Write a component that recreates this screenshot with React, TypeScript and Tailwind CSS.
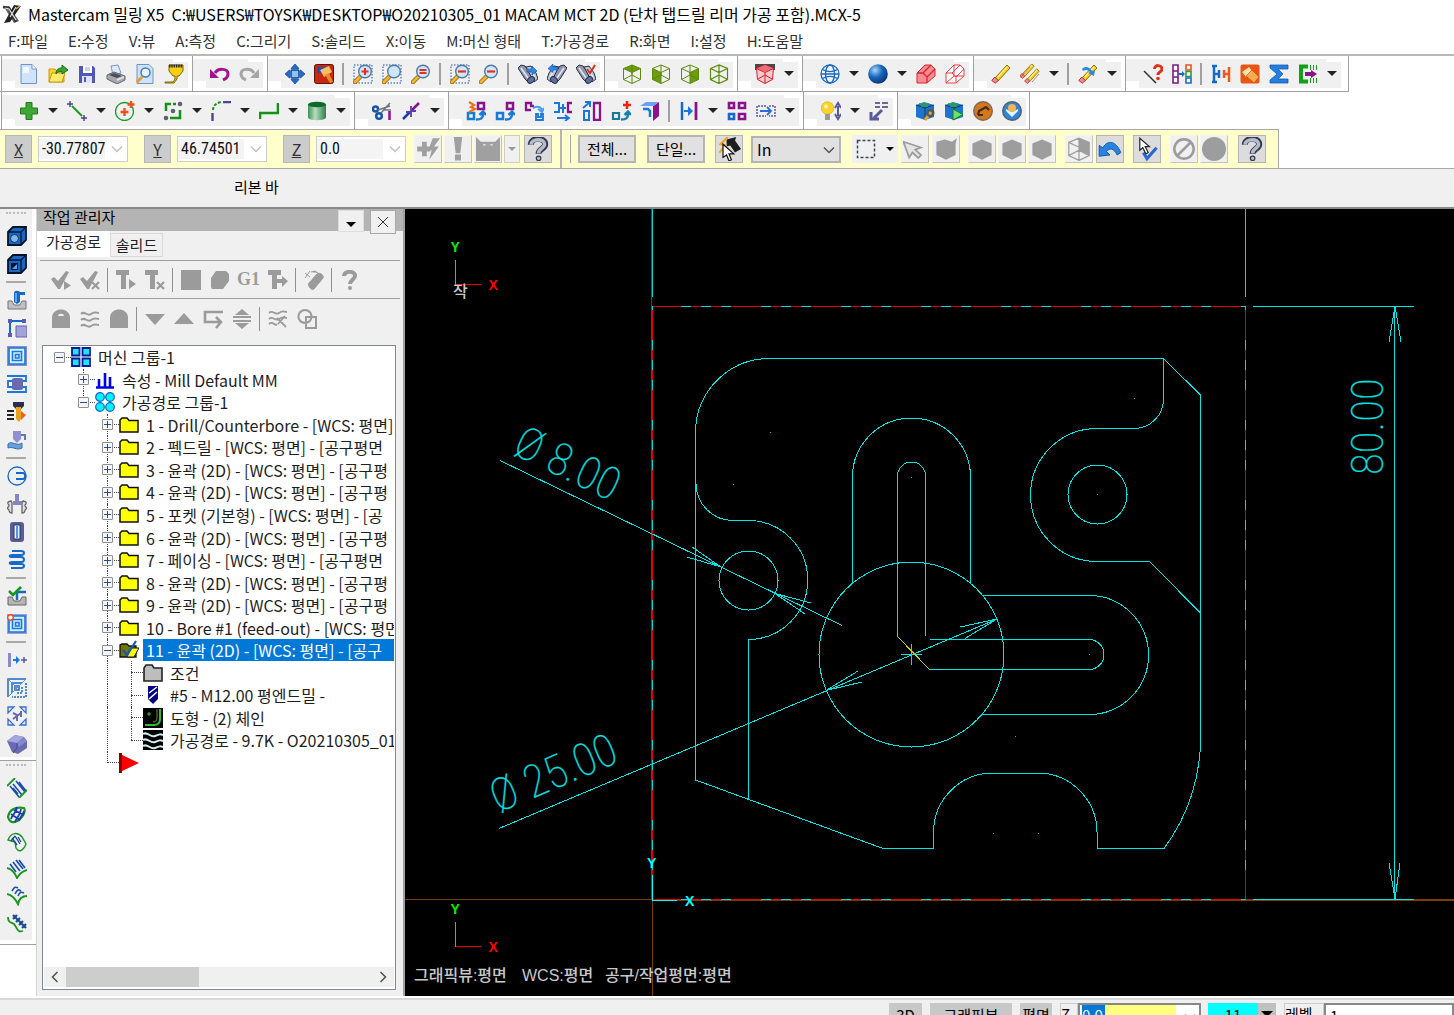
import type { ReactNode } from "react";

const cubeLines = "M1.500 4.500 10 1l8.500 3.500v11L10 19.500l-8.500-4zM1.500 4.500 10 8.500l8.500-4M10 8.500v11M1.500 15.500 10 11l8.500 4.500M10 1v10";

const magnifier = (sign: ReactNode, dotted = true) => (
  <>
    {dotted && <rect x="1" y="1" width="18" height="18" fill="none" stroke="#1b4fae" strokeDasharray="1.500 1.500" />}
    <path d="m2 18 5.500-5.500" stroke="#8a5a14" strokeWidth="4.500" strokeLinecap="round" />
    <path d="m2 18 5.500-5.500" stroke="#f4b52c" strokeWidth="3" strokeLinecap="round" />
    <circle cx="12" cy="7.500" r="6.300" fill="#cfe7fb" stroke="#4f78a8" strokeWidth="1.400" />
    {sign}
  </>
);

const binoculars = (extra: ReactNode, flip = false) => (
  <>
    <g transform={flip ? "translate(20 0) scale(-1 1)" : undefined} stroke="#2b3040" strokeWidth="1">
      <path d="M0 4 3 1l4 1 9 12-5 5-4-4z" fill="#8f97ae" />
      <path d="m8 3 5-1 5 7 2 6-4 3z" fill="#b9c0d4" />
      <path d="m3 4 7 10M11 4l6 9" stroke="#e4e8f4" strokeWidth="1.500" />
      <ellipse cx="13" cy="16" rx="3.800" ry="2.800" fill="#5c6fa0" transform="rotate(-40 13 16)" />
    </g>
    {extra}
  </>
);

const eraser = (
  <>
    <path d="m4 14 12-13 3 3L7 17z" fill="#f2cf1d" stroke="#8d6f0c" />
    <path d="m7 13 9-10" stroke="#fff08a" strokeWidth="1.300" />
    <path d="m.800 16.500 3-3.500 3.500 3.500-3 2.700z" fill="#f58a8a" stroke="#b23434" />
  </>
);

const cursorShape = "M3 1v14l4-3 3 6 3-1.500-3-6h5z";

const icons: Record<string, ReactNode> = {
  logo: (
    <>
      <path d="m2 3 5-1 10 15-5 2z" fill="#666" />
      <path d="m12 1 7 1L8 18l-6 1z" fill="#222" />
      <path d="m1 3 6 1 7 14" stroke="#333" strokeWidth="2.500" fill="none" />
      <path d="m3 4 4 1 7 11M14 3 8 13" stroke="#e4e4e4" strokeWidth="1.200" fill="none" />
      <path d="m14 5 4-3" stroke="#c9a15a" strokeWidth="1.500" />
    </>
  ),
  new: (
    <>
      <path d="M2 .500h11l4.500 4.500v14.500H2z" fill="#cfe3fa" stroke="#6f94c4" />
      <path d="M13 .500V5h4.500" fill="#fff" stroke="#6f94c4" />
      <path d="M4 3h6v6H4z" fill="#f1f8ff" />
    </>
  ),
  open: (
    <>
      <path d="M1 5h6l2 2h7v11H1z" fill="#f6d223" stroke="#c59c10" />
      <path d="m1 18 3-9h13l-3 9z" fill="#fdea6b" stroke="#c59c10" />
      <path d="M8 10c0-5 3-6 6-6V1l6 5-6 4V7.500c-3 0-4 0-6 2.500z" fill="#3aa534" stroke="#1d6e1b" />
    </>
  ),
  save: (
    <>
      <path d="M2 2h14l2 2v15H2z" fill="#5258b8" />
      <path d="M6 2h9v7H6z" fill="#fff" />
      <path d="M8 4h5M8 6h5" stroke="#9aa0c8" />
      <path d="M5 12h10v7H5z" fill="#dfe3ff" />
      <path d="M7 13h2v5H7z" fill="#5258b8" />
    </>
  ),
  print: (
    <>
      <path d="m5 2 7-1 3 8-8 2z" fill="#dcebfb" stroke="#7b96c0" />
      <path d="m1 11 7-3 11 4v4l-8 4-10-5z" fill="#a5a8ae" stroke="#62666e" />
      <path d="m3 11 5-2 8 3-5 2z" fill="#4a4d53" />
      <path d="m11 15 7-3v2l-7 3z" fill="#e2e4e8" />
    </>
  ),
  preview: (
    <>
      <path d="M2 .500h12l4 4v15H2z" fill="#cfe3fa" stroke="#6f94c4" />
      <circle cx="10.500" cy="8.500" r="4.500" fill="#eaf6ff" stroke="#3f7cb8" strokeWidth="1.500" />
      <path d="m2 18 5-5" stroke="#e69c25" strokeWidth="3" />
    </>
  ),
  funnel: (
    <>
      <path d="M5 1h14v6l-4 5h-2v3l-3 4H1v-1h8l2-3v-3H9L5 7z" fill="#f6cf13" stroke="#7c6409" />
      <path d="M5 2h14" stroke="#2b2b2b" strokeWidth="3" strokeDasharray="1.500 .8" />
    </>
  ),
  undo: (
    <>
      <path d="M5 9c3-5 13-5 13 1 0 4-3 5-5 6" fill="none" stroke="#a2128f" strokeWidth="3" />
      <path d="M0 5v9h9z" fill="#a2128f" />
    </>
  ),
  redo: (
    <>
      <path d="M15 9C12 4 2 4 2 10c0 4 3 5 5 6" fill="none" stroke="#a5a5a5" strokeWidth="3" />
      <path d="M20 5v9h-9z" fill="#a5a5a5" />
    </>
  ),
  fit: (
    <>
      <path d="m10 0 4 4.500H6zM10 20l-4-4.500h8zM0 10l4.500-4v8zM20 10l-4.500 4V6z" fill="#1c6fd8" stroke="#0b4494" strokeWidth=".7" />
      <rect x="6" y="6" width="8" height="8" rx="1" fill="#8cc3f7" stroke="#0b4494" strokeWidth="1.500" />
    </>
  ),
  repaint: (
    <>
      <rect x=".5" y=".5" width="19" height="19" rx="2" fill="#c7260f" stroke="#5c1608" />
      <path d="M3 3h9v6H3z" fill="#1d4fb5" />
      <path d="m6 6 9-4 3 6-8 5z" fill="#f7bd67" />
      <path d="m11 11 4-2 4 9-3 1z" fill="#e98b24" />
    </>
  ),
  zoomWindow: magnifier(<path d="M12 4v7M8.500 7.500h7" stroke="#e2311d" strokeWidth="2.200" />),
  zoomTarget: magnifier(null),
  zoomEqual: magnifier(<path d="M8.500 6h7M8.500 9h7" stroke="#e2311d" strokeWidth="1.800" />, false),
  unzoomWindow: magnifier(<path d="M8 7.500h8" stroke="#e2311d" strokeWidth="2.200" />),
  unzoom: magnifier(<path d="M8 7.500h8" stroke="#e2311d" strokeWidth="2.200" />, false),
  viewNext: binoculars(<path d="M9 5h5V2l5 5-5 4V8H9z" fill="#2f86e4" stroke="#134e98" strokeWidth=".6" />),
  viewPrev: binoculars(<path d="M11 3H6V0L1 4.500l5 4V6h5z" fill="#2f86e4" stroke="#134e98" strokeWidth=".6" />, true),
  viewSave: binoculars(<path d="m11 5 3 4 5-8" fill="none" stroke="#d9311a" strokeWidth="2" />),
  cubeTop: (
    <>
      <path d="M1.500 4.500 10 1l8.500 3.500L10 8.500z" fill="#6c9c10" />
      <path d={cubeLines} fill="none" stroke="#5d8a0b" />
    </>
  ),
  cubeFront: (
    <>
      <path d="m1.500 4.500 8.500 4v11l-8.500-4z" fill="#6c9c10" />
      <path d={cubeLines} fill="none" stroke="#5d8a0b" />
    </>
  ),
  cubeRight: (
    <>
      <path d="m18.500 4.500-8.500 4v11l8.500-4z" fill="#6c9c10" />
      <path d={cubeLines} fill="none" stroke="#5d8a0b" />
    </>
  ),
  cubeIso: <path d={cubeLines} fill="none" stroke="#5d8a0b" strokeWidth="1.200" />,
  cubePlane: (
    <>
      <path d="M0 0h20v6H0z" fill="#4a4546" />
      <path d="M1.500 4.500 10 1l8.500 3.500-1 11L10 19.500l-7.500-4z" fill="#f9c9cc" stroke="#d8202c" />
      <path d="M1.500 4.500 10 1l8.500 3.500L10 8z" fill="#ef6b74" />
      <path d="m1.500 4.500 8.500 4 8.500-4M10 8.500v11M3 15l7-4 7 4" fill="none" stroke="#d8202c" />
    </>
  ),
  wireSphere: (
    <g fill="none" stroke="#1769c9" strokeWidth="1.300">
      <circle cx="10" cy="10" r="9" />
      <ellipse cx="10" cy="10" rx="4.500" ry="9" />
      <path d="M1 10h18M2.500 5.500C7 8 13 8 17.500 5.500M2.500 14.500c4.500-2.500 10.500-2.500 15 0" />
    </g>
  ),
  sphere: (
    <>
      <radialGradient id="sphereFill" cx=".35" cy=".3" r=".75">
        <stop offset="0" stopColor="#a9d4fb" />
        <stop offset=".5" stopColor="#1766bd" />
        <stop offset="1" stopColor="#08356f" />
      </radialGradient>
      <circle cx="10" cy="10" r="9.800" fill="url(#sphereFill)" />
    </>
  ),
  solidRed: (
    <>
      <path d="m1 9 8-8h6l4 4v7l-8 7H1z" fill="#f58d93" stroke="#e0232d" />
      <path d="M1 9h6l4 4v6M7 9l8-8M11 13l8-8" fill="none" stroke="#e0232d" strokeWidth="1.300" />
    </>
  ),
  wireRed: (
    <>
      <path d="m1 9 8-8h6l4 4v7l-8 7H1z" fill="#fff" stroke="#ef3f49" />
      <path d="M1 9h6l4 4v6M7 9l8-8M11 13l8-8M1 19l8-7h10M9 12V1" fill="none" stroke="#ef3f49" />
    </>
  ),
  eraser,
  eraserMany: (
    <>
      <g transform="translate(-1 -1) scale(.8)">{eraser}</g>
      <g transform="translate(4 4) scale(.8)">{eraser}</g>
      <path d="m1 13 9-10M12 18l7-8" stroke="#b23434" strokeWidth=".6" />
    </>
  ),
  eraserUndo: (
    <>
      {eraser}
      <path d="M4 5c4-4 8-1 10 2l3-1-1 6-6-3 2-1c-2-2-4-3-7-1z" fill="#2f86e4" />
    </>
  ),
  helpEntity: (
    <>
      <path d="m1 7 12 12" stroke="#333" strokeWidth="1.500" />
      <path d="M11.500 5c0-5 7.500-4 7.500 0 0 3-4 2.500-4 6" fill="none" stroke="#e0311c" strokeWidth="3" />
      <circle cx="15" cy="14.500" r="1.800" fill="#e0311c" />
    </>
  ),
  film: (
    <>
      <path d="M1 1h5v18H1zM1 7h5M1 13h5" fill="#fff" stroke="#7c1a85" strokeWidth="1.600" />
      <path d="M14 1h5v5h-5z" fill="#fff" stroke="#e8531a" strokeWidth="1.600" />
      <path d="M14 7.500h5v5h-5z" fill="#fff" stroke="#2a9c36" strokeWidth="1.600" />
      <path d="M14 14h5v5h-5z" fill="#fff" stroke="#1769c9" strokeWidth="1.600" />
      <path d="M7 9h3V7l3 3-3 3v-2H7z" fill="#1769c9" />
    </>
  ),
  compare: (
    <>
      <path d="M3 1v18M1 2h5M1 18h5M3 10h6M8 6v8" stroke="#1769c9" strokeWidth="2.500" />
      <path d="M18 3v15M12 10h6M13 6v8" stroke="#ef5a1a" strokeWidth="2.500" />
    </>
  ),
  brush: (
    <>
      <rect x=".5" y=".5" width="19" height="19" rx="2" fill="#ea5414" />
      <path d="m2 8 7-5 3 4-6 6z" fill="#ffe0a8" />
      <path d="m6 12 6-6 7 7-5 6z" fill="#f5ac4e" stroke="#b24b0b" strokeWidth=".6" />
    </>
  ),
  sigma: <path d="M1 1h18v4H9l5 5-5 5h10v4H1v-3l7-6-7-6z" fill="#2380e2" stroke="#0e4f9e" strokeWidth=".7" />,
  stitch: (
    <>
      <path d="M10 2.500H3v15h7" fill="none" stroke="#12a01c" strokeWidth="4" />
      <path d="M12.500 1v18M15.500 1v18M18.500 1v18" stroke="#12a01c" strokeDasharray="5 8" />
      <path d="M7 8h6V6l6 4-6 4v-2H7z" fill="#8a128a" />
    </>
  ),

  plus: <path d="M7 1.500h6V7h5.500v6H13v5.500H7V13H1.500V7H7z" fill="#3fa535" stroke="#1e7e19" />,
  line: (
    <>
      <path d="m5 5 10 10" stroke="#169b1d" strokeWidth="2" />
      <path d="M3 0v6M0 3h6M17 14v6M14 17h6" stroke="#45408c" strokeWidth="1.400" />
    </>
  ),
  circle: (
    <>
      <circle cx="9.500" cy="10.500" r="9" fill="none" stroke="#169b1d" strokeWidth="1.300" />
      <path d="M9.500 7v8M5.500 11h8M16 0v7M12.500 3.500h7" stroke="#f04e1c" strokeWidth="2.400" />
    </>
  ),
  rect: (
    <>
      <path d="M8 3H3v7M7 17h10V9M10 3h3" fill="none" stroke="#159018" strokeWidth="2.500" />
      <circle cx="10" cy="10" r="2.300" fill="#5f6070" />
      <circle cx="17" cy="3" r="2.300" fill="#5f6070" />
      <circle cx="3" cy="17" r="2.300" fill="#5f6070" />
    </>
  ),
  fillet: (
    <>
      <path d="M1.500 12v8M12 1h8" stroke="#4b4791" strokeWidth="2.400" />
      <path d="M2 9c0-4 3-7 8-8" fill="none" stroke="#159018" strokeWidth="2" strokeDasharray="3 1.500" />
    </>
  ),
  spline: <path d="M1 18v-6h18V2" fill="none" stroke="#159018" strokeWidth="2.600" />,
  cylinder: (
    <>
      <linearGradient id="cylinderFill">
        <stop offset="0" stopColor="#3c9358" />
        <stop offset=".4" stopColor="#b8dcc2" />
        <stop offset="1" stopColor="#2a8247" />
      </linearGradient>
      <path d="M1 3h18v14c-3 3-15 3-18 0z" fill="url(#cylinderFill)" />
      <ellipse cx="10" cy="3.500" rx="9" ry="2.800" fill="#0c6b2a" />
    </>
  ),
  trim: (
    <>
      <circle cx="3.500" cy="8" r="2.500" fill="none" stroke="#1652a8" strokeWidth="2.500" />
      <circle cx="7" cy="15" r="2.800" fill="none" stroke="#1652a8" strokeWidth="2.500" />
      <path d="m6 9 12-4M9 12l9-10M12 9h7" stroke="#6e7585" strokeWidth="1.600" />
      <path d="M17.500 10v9" stroke="#8a128a" strokeWidth="2.500" />
    </>
  ),
  breakLine: (
    <>
      <path d="m2 18 7-7" stroke="#1a3f9e" strokeWidth="2.500" />
      <path d="m11 9 7-7" stroke="#8a128a" strokeWidth="2.500" />
      <path d="M5 11h5v5M10 5v5h5" fill="none" stroke="#5a3fae" strokeWidth="1.800" />
    </>
  ),
  xformDynamic: (
    <>
      <path d="M12 2h6v6h-6z" fill="none" stroke="#8a128a" strokeWidth="2.500" />
      <path d="M2 12h6v6H2z" fill="none" stroke="#1878dc" strokeWidth="2.500" />
      <path d="m3 1 5 3-3 2 4 2-6 3" fill="none" stroke="#f0701a" strokeWidth="2.200" />
      <path d="M10 18.500c5 0 7-1 7-6M13.500 14 17 10.500 20 14" fill="none" stroke="#1878dc" strokeWidth="2.500" />
    </>
  ),
  xformTranslate: (
    <>
      <path d="M12 2h6v6h-6z" fill="none" stroke="#8a128a" strokeWidth="2.500" />
      <path d="M2 12h6v6H2z" fill="none" stroke="#1878dc" strokeWidth="2.500" />
      <path d="M10 18.500c5 0 7-1 7-6M13.500 14 17 10.500 20 14" fill="none" stroke="#1878dc" strokeWidth="2.500" />
    </>
  ),
  xformRotate: (
    <>
      <path d="M7 9H2V2h5v3h3" fill="none" stroke="#8a128a" strokeWidth="2.300" />
      <path d="M12 13v6h7v-6h-2v3h-3v-3z" fill="#fff" stroke="#1878dc" strokeWidth="1.800" />
      <path d="M9 7c6-3 9 0 9 3M14 8l4 3 2-4" fill="none" stroke="#4aa0ee" strokeWidth="2" />
    </>
  ),
  xformMirror: (
    <>
      <path d="M1 2h5v9H1M10 3v9M7 7h6" fill="none" stroke="#1878dc" strokeWidth="2" />
      <path d="M19 2h-4v9h4" fill="none" stroke="#8a128a" strokeWidth="2.300" />
      <path d="M4 17h11M12 14l4 3-4 3" fill="none" stroke="#1878dc" strokeWidth="1.800" />
    </>
  ),
  xformScale: (
    <>
      <path d="M2 10h5v9H2z" fill="none" stroke="#1878dc" strokeWidth="2" />
      <path d="M12 2h6v17h-6z" fill="none" stroke="#8a128a" strokeWidth="2.300" />
      <path d="m1 7 7-6M3 1h5v5" fill="none" stroke="#1878dc" strokeWidth="2" />
    </>
  ),
  xformMove: (
    <>
      <path d="M2 12h6v6H2z" fill="none" stroke="#1878a0" strokeWidth="2.200" />
      <path d="M10 18.500c5 0 7-1 7-6M13.500 14 17 10.500 20 14" fill="none" stroke="#1880b0" strokeWidth="2.500" />
      <path d="M16 0v8M12 4h8" stroke="#ee2413" strokeWidth="2.500" />
    </>
  ),
  xformOffset: (
    <>
      <path d="M13 5 19 1v14l-6 5z" fill="#8a128a" />
      <path d="M0 5 6 1h12l-4 4z" fill="#6f9ff4" />
      <path d="M3 8h5l2 2v6" fill="none" stroke="#1878dc" strokeWidth="2.500" />
    </>
  ),
  offset: (
    <>
      <path d="M3 1v18" stroke="#1769c9" strokeWidth="2.500" />
      <path d="M17 1v18" stroke="#8a128a" strokeWidth="2.800" />
      <path d="M5 9h4V5l5 5-5 5v-4H5z" fill="#1878dc" />
    </>
  ),
  array: (
    <g fill="none" strokeWidth="2.600">
      <path d="M2 2h5v5H2zM12 2h6v5h-6zM12 13h6v5h-6z" stroke="#8a128a" />
      <path d="M2 13h5v5H2z" stroke="#1769c9" />
    </g>
  ),
  stretch: (
    <>
      <path d="M10 5H1v10h9M13 5h6v10h-6" fill="none" stroke="#5a5aa6" strokeWidth="1.500" strokeDasharray="2 1" />
      <path d="M4 10h10M11 6l4 4-4 4" fill="none" stroke="#2a70d4" strokeWidth="1.800" />
    </>
  ),
  bulb: (
    <>
      <circle cx="6.500" cy="7" r="6.300" fill="#f9d32c" stroke="#d5a710" strokeWidth=".6" />
      <path d="M4 13h5v6H4z" fill="#9a9a9a" />
      <circle cx="5" cy="5.500" r="2" fill="#fff4b0" />
      <path d="M17 5v10M14 7l3-5 3 5M14 13l3 5 3-5" fill="none" stroke="#5a599b" strokeWidth="2" />
    </>
  ),
  dimension: (
    <>
      <path d="M6 2h5M13 2h6M6 6h5M13 6h6" stroke="#6a6890" strokeWidth="2" />
      <path d="m13 9-8 8M2 11v7h8" fill="none" stroke="#5a599b" strokeWidth="3" />
    </>
  ),
  machineSim: (
    <>
      <path d="m1 4 8-3 10 3v12l-9 3-9-3z" fill="#1c74cf" />
      <path d="m1 4 9 3 9-3M10 7v12" fill="none" stroke="#0b3a74" />
      <path d="M4 3h10M6 5h7" stroke="#2fa545" strokeWidth="1.500" />
      <path d="m10 19 6-8" stroke="#e6a526" strokeWidth="3" />
      <circle cx="15.500" cy="12" r="3" fill="none" stroke="#555" strokeWidth="2" />
    </>
  ),
  machineRun: (
    <>
      <path d="m1 4 8-3 10 3v12l-9 3-9-3z" fill="#1c74cf" />
      <path d="m1 4 9 3 9-3M10 7v12" fill="none" stroke="#0b3a74" />
      <path d="M4 3h10M6 5h7" stroke="#2fa545" strokeWidth="1.500" />
      <path d="m9 8 10 5.500L9 19z" fill="#6be06b" stroke="#178217" />
    </>
  ),
  robot: (
    <>
      <circle cx="10" cy="10" r="9.300" fill="#d4771d" stroke="#7d6a55" strokeWidth="1.400" />
      <path d="m5 14 1-4 7-4 3 3M5 14h5" fill="none" stroke="#452a14" strokeWidth="2.200" />
    </>
  ),
  partOrb: (
    <>
      <circle cx="10" cy="10" r="9.300" fill="#2c86de" stroke="#57606b" strokeWidth="1.400" />
      <path d="m4 10 6 6 6-6v-2l-6 3-6-3z" fill="#e9f3fd" />
      <circle cx="10" cy="7" r="4" fill="#f5b454" />
    </>
  ),

  fast: <path d="M1 8h4V4h4v4h3v4H9v4H5v-4H1zM14 1h6l-5 7h4l-8 11 2-8h-3z" fill="#a0a0a0" />,
  exclaim: <path d="M7 0h6l-1.500 13h-3zM8 15h4v4H8z" fill="#a0a0a0" stroke="#a0a0a0" />,
  face: (
    <>
      <path d="m0 0 4 4h12l4-4v20H0z" fill="#a0a0a0" />
      <path d="M6 6h2v1H6zM12 6h2v1h-2z" fill="#f0f0f0" />
    </>
  ),
  question: (
    <>
      <path d="M4 6.500C4 0 16 0 16 6c0 4-5.500 3.500-5.500 8" fill="none" stroke="#343a48" strokeWidth="5" />
      <path d="M4.300 6.300C4.500 1 15.500 1 15.500 6c0 3.500-5 3.500-5 7.500" fill="none" stroke="#b5bccf" strokeWidth="3" />
      <circle cx="10.500" cy="17.800" r="1.900" fill="#b5bccf" stroke="#343a48" />
    </>
  ),
  arrowPick: (
    <>
      <path d="m8 2 8-2-1 3 5 7-5 3-4-6-3 1z" fill="#1d1d1d" />
      <path d="M9 0 3 6l4 1-5 6" fill="none" stroke="#f2a51c" strokeWidth="1.800" />
      <path d="M5 6v11l3-2 2 5 2-1-2-5h4z" fill="#fff" stroke="#111" />
    </>
  ),
  dotted: <path d="M1.500 1.500h17v17h-17z" fill="none" stroke="#3b4654" strokeWidth="1.500" strokeDasharray="3 2" />,
  cursorOff: <path d={cursorShape} fill="#e4e4e4" stroke="#9d9d9d" strokeWidth="1.500" transform="rotate(-20 10 10)" />,
  hexCheck: <path d="m2 4 7-2 6 2 4-3-1 5v9l-8 4-8-4z" fill="#9d9d9d" />,
  hex: <path d="M2 5.500 10 2l8 3.500v9.500L10 19l-8-4z" fill="#9d9d9d" />,
  cubeHalf: (
    <>
      <path d="m10 1 8.500 3.500v11L10 11z" fill="#9d9d9d" />
      <path d={cubeLines} fill="none" stroke="#9d9d9d" />
    </>
  ),
  arcBack: <path d="M1 16V7l3 2c4-7 11-6 15 4l-3 2c-3-6-6-6-9-3l3 3z" fill="#2a82e0" stroke="#1358a8" strokeWidth=".8" />,
  cursorCheck: (
    <>
      <path d="m7 13 3 5 8-9" fill="none" stroke="#2c66d4" strokeWidth="2.600" />
      <path d="M4 1v10l2.500-2 2.500 5 2-1-2.500-5H12z" fill="#fff" stroke="#222" />
    </>
  ),
  forbid: <path d="M10 2a8 8 0 1 0 .01 0zM5 15 15 5" fill="none" stroke="#9d9d9d" strokeWidth="2.200" />,
  disc: <circle cx="10" cy="10" r="10" fill="#9d9d9d" />,

  checkPlay: <path d="m0 9 3-2 4 4 8-10 3 1-9 17H7zM13 11l7 4.500-7 4.500z" fill="#9b9b9b" />,
  checkX: (
    <>
      <path d="m0 9 3-2 4 4 8-10 3 1-9 17H7z" fill="#9b9b9b" />
      <path d="m12 12 7 7M19 12l-7 7" stroke="#9b9b9b" strokeWidth="2.200" />
    </>
  ),
  toolPlay: <path d="M0 0h13v5h-3v14H5V5H0zM13 9l7 5-7 5z" fill="#9b9b9b" />,
  toolX: (
    <>
      <path d="M0 0h13v5h-3v14H5V5H0z" fill="#9b9b9b" />
      <path d="m12 12 7 7M19 12l-7 7" stroke="#9b9b9b" strokeWidth="2.200" />
    </>
  ),
  square: <path d="M0 0h20v20H0z" fill="#9b9b9b" />,
  octagon: <path d="M6 1h10l3 3v7l-6 8H2l-1-2V8z" fill="#9b9b9b" />,
  toolNext: <path d="M0 0h13v5h-4v14H4V5H0zM9 9h5V6l6 5-6 6v-4H9z" fill="#9b9b9b" />,
  wand: <path d="m5 13 8-9c3-2 7 1 6 4l-9 11c-2 2-7-3-5-6zM1 3l5 4M6 1 1 8M7 2l4-1 3 2" fill="#9b9b9b" stroke="#9b9b9b" />,
  questionOff: (
    <>
      <path d="M4 6C4 0 16 1 15 6c0 3-5 4-5 8" fill="none" stroke="#9b9b9b" strokeWidth="4" />
      <circle cx="10" cy="18" r="2" fill="#9b9b9b" />
    </>
  ),
  lock: <path d="M1 8C2-2 18-2 19 8v11H1zM7 7h6c0-3-6-3-6 0z" fill="#9b9b9b" fillRule="evenodd" />,
  waves: (
    <path d="M1 5c4-4 6 3 10 0s5-1 8-1M1 11c4-4 6 3 10 0s5-1 8-1M1 17c4-4 6 3 10 0s5-1 8-1" fill="none" stroke="#9b9b9b" strokeWidth="2" />
  ),
  lockFill: <path d="M1 8C2-2 18-2 19 8v11H1z" fill="#9b9b9b" />,
  down: <path d="M0 5h20L10 16z" fill="#9b9b9b" />,
  up: <path d="M0 15h20L10 4z" fill="#9b9b9b" />,
  loop: <path d="M20 3H2v10h14M13 8l5 5-5 6" fill="none" stroke="#9b9b9b" strokeWidth="2.600" />,
  split: <path d="m10 0 7 6H3zM1 7h18v2H1zM1 11h18v2H1zM10 20l-7-6h14z" fill="#9b9b9b" />,
  wavesOff: (
    <path d="M1 4c4-4 6 3 10 0s5-1 8-1M1 10c4-4 6 3 10 0s5-1 8-1M1 15c4-4 6 3 8 0M9 9l9 9M17 7l-7 8" fill="none" stroke="#9b9b9b" strokeWidth="1.800" />
  ),
  shapes: (
    <path d="M8 1a6.500 6.500 0 1 0 .01 0zM9 8h10v11H9z" fill="none" stroke="#9b9b9b" strokeWidth="2" />
  ),

  machineGroup: (
    <path d="M1 1h7.500v7.500H1zM11.500 1H19v7.500h-7.500zM1 11.500h7.500V19H1zM11.500 11.500H19V19h-7.500z" fill="#19e8f0" stroke="#0a1a9a" strokeWidth="1.800" />
  ),
  properties: <path d="M1 17.500h18M4 17V9M10 17V3M15 17V7" stroke="#0000ee" strokeWidth="2.600" />,
  pathGroup: (
    <g fill="#00f4ff" stroke="#1462c8" strokeWidth="1.200">
      <circle cx="5" cy="5" r="4.300" />
      <circle cx="15" cy="5" r="4.300" />
      <circle cx="5" cy="15" r="4.300" />
      <circle cx="15" cy="15" r="4.300" />
    </g>
  ),
  folder: <path d="M1 17V5l2-2h5l2 2.500h9V17z" fill="#ffff00" stroke="#111" strokeWidth="1.500" />,
  folderOpen: (
    <>
      <path d="M1 17V5l2-1h5l2 2h7v11z" fill="#747400" stroke="#111" strokeWidth="1.300" />
      <path d="m8 17 4-9h8l-5 9z" fill="#ffff00" stroke="#111" />
      <path d="m4 10 4 5 9-14" fill="none" stroke="#1557b8" strokeWidth="2.200" />
    </>
  ),
  folderGray: <path d="M1 18V5l2-3h6l2 3h8v13z" fill="#bdbdbd" stroke="#222" strokeWidth="1.600" />,
  endmill: (
    <>
      <path d="M5 1h10v13l-5 5-5-5z" fill="#000080" />
      <path d="m6 8 8-6M6 14l8-7" stroke="#fff" strokeWidth="1.500" />
    </>
  ),
  geometry: (
    <>
      <path d="M0 0h20v20H0z" fill="#000" />
      <path d="M17 1v10c0 4-2 6-6 6H2" fill="none" stroke="#2fbf36" strokeWidth="2" />
      <path d="M14 1v9c0 3-2 4-4 4" fill="none" stroke="#8a8a10" />
      <path d="M6 4v4M4 6h4" stroke="#2fbf36" />
    </>
  ),
  nci: (
    <>
      <path d="M0 0h20v20H0z" fill="#000" />
      <path d="M0 4c5-3 7 4 12 2s5-2 8-1M0 10c5-3 7 4 12 2s5-2 8-1M0 16c5-3 7 4 12 2s5-2 8-1" fill="none" stroke="#d5efef" strokeWidth="2" />
    </>
  ),
  insert: (
    <>
      <path d="M1 1 20 10 1 19z" fill="#ff0000" />
      <path d="M0 0h3v20H0z" fill="#8b0000" />
    </>
  ),

  boxHole: (
    <>
      <path d="m1 6 5-5h13v13l-5 5H1z" fill="#1568c4" stroke="#04142c" strokeWidth="1.800" />
      <path d="M1 6h13v13M14 6l5-5" fill="none" stroke="#04142c" strokeWidth="1.300" />
      <circle cx="7.500" cy="12.500" r="4" fill="#7fb8ee" stroke="#06315f" />
    </>
  ),
  boxPocket: (
    <>
      <path d="m1 6 5-5h13v13l-5 5H1z" fill="#1568c4" stroke="#04142c" strokeWidth="1.800" />
      <path d="M1 6h13v13M14 6l5-5" fill="none" stroke="#04142c" strokeWidth="1.300" />
      <path d="M4 9h7v7H4z" fill="#04142c" />
      <path d="m5 15 5-5v5z" fill="#5aa2e8" />
    </>
  ),
  contour: (
    <>
      <path d="M1 11h4l2 4h6l2-4h4v8H1z" fill="#c0c0c4" stroke="#777" />
      <path d="M7 3c0-3 6-3 6 0v9l-3 2-3-2z" fill="#1769c9" />
      <path d="M12 2h6v3h-6z" fill="#1769c9" />
      <path d="M8 3h2v9H8z" fill="#5ea6ef" />
    </>
  ),
  drillPath: (
    <>
      <path d="M3 17V3h14" fill="none" stroke="#1769c9" strokeWidth="2" />
      <path d="M9 8h11v11H9z" fill="#a3a3dc" stroke="#6565ac" />
      <path d="M1 1h4v4H1zM15 1h4v4h-4zM1 15h4v4H1z" fill="#5a5ac0" />
    </>
  ),
  pocket: (
    <>
      <path d="M0 0h20v20H0z" fill="#8d8dce" />
      <path d="M2 2h16v16H2zM5.500 5.500h9v9h-9zM8.500 8.500h3.500v3.500H8.500z" fill="#d7efff" stroke="#1878dc" strokeWidth="1.600" />
    </>
  ),
  facing: (
    <>
      <path d="M0 2h19v5H1v6h18v5H0" fill="none" stroke="#1878dc" strokeWidth="1.800" />
      <rect x="5" y="4" width="11" height="12" rx="2" fill="#6a6aae" />
    </>
  ),
  drill: (
    <>
      <path d="M6 0h11v4l-3 3H9L6 4z" fill="#2b2b55" />
      <path d="M9 5h5v12l-2 3-3-3z" fill="#e8a31e" />
      <path d="M0 9h7M0 13h7M0 17h7" stroke="#222" strokeWidth="2" />
      <path d="m14 9 5 4-5 5z" fill="#f0601a" />
    </>
  ),
  surface: (
    <>
      <path d="M1 14c4-4 9 3 14-1v5c-5 3-9-2-14 0z" fill="#67a0e0" stroke="#3a6ba8" />
      <path d="M6 1h8v8l-4 4-4-4z" fill="#8f8fd4" />
      <path d="M14 5h4v5" fill="none" stroke="#5a7ab8" strokeWidth="2" />
    </>
  ),
  circleMill: (
    <>
      <circle cx="10" cy="10" r="9" fill="none" stroke="#1769c9" strokeWidth="1.300" />
      <path d="M9 7h7c3 0 3 6 0 6H9" fill="none" stroke="#1769c9" strokeWidth="2.200" />
    </>
  ),
  thread: (
    <>
      <path d="M4 7c-5 1-3 3-2 4s-3 3-1 4 0 4 4 4V9zM16 7c5 1 3 3 2 4s3 3 1 4 0 4-4 4V9z" fill="#e0e0e0" stroke="#666" strokeWidth="1.300" />
      <path d="M8 0h4v7h3v4H6V7h2z" fill="#8585c4" />
    </>
  ),
  slot: (
    <>
      <rect x="3" y="0" width="14" height="20" rx="3" fill="#5b5b98" />
      <rect x="7" y="3" width="6" height="14" fill="#e7f3ff" stroke="#333366" />
      <path d="M10 4v12" stroke="#1878dc" strokeWidth="1.500" />
    </>
  ),
  helix: (
    <path d="M5 1h9c4 0 4 4 0 4H5c-3 0-3 2 0 2h9c4 0 4 5 0 5H5c-3 0-3 2 0 2h9c4 0 4 4 0 4H4" fill="none" stroke="#1769c9" strokeWidth="2" />
  ),
  contourCheck: (
    <>
      <path d="M1 11h4l2 4h6l2-4h4v8H1z" fill="#b5b5b5" stroke="#666" />
      <path d="M10 14V6h9" fill="none" stroke="#1769c9" strokeWidth="2.500" />
      <path d="m2 5 4 4 8-8" fill="none" stroke="#16961b" strokeWidth="2.600" />
    </>
  ),
  pocketPoint: (
    <>
      <path d="M0 0h20v20H0z" fill="#9d9dd8" />
      <path d="M2 2h16v16H2zM5.500 5.500h9v9h-9zM8.500 8.500h3.500v3.500H8.500z" fill="#d7efff" stroke="#1878dc" strokeWidth="1.600" />
      <circle cx="3.500" cy="3.500" r="2.800" fill="#fff" stroke="#ee4a1a" strokeWidth="1.400" />
    </>
  ),
  point: (
    <>
      <path d="M1 3h3v14H1z" fill="#8a8ac8" />
      <path d="M6 9h3V6l4 4-4 4v-3H6z" fill="#1878dc" />
      <path d="M17 7v6M14 10h6" stroke="#5a599b" strokeWidth="1.500" />
    </>
  ),
  pocketCorner: (
    <>
      <path d="M19 1H1v18M5 15V5h10M8 8h4v4H8z" fill="none" stroke="#1769c9" strokeWidth="1.500" />
      <path d="M19 5v14H5M15 9v6H9" fill="none" stroke="#1769c9" strokeWidth="1.500" strokeDasharray="2 1" />
      <path d="m1 1 9 9M19 1 1 19" stroke="#6f8fc0" fill="none" />
    </>
  ),
  expand: (
    <>
      <path d="M1 1h6L1 7zM19 1h-6l6 6zM1 19h6l-6-6zM19 19h-6l6-6z" fill="#d8e9fb" stroke="#3a6fd0" strokeWidth="1.300" />
      <path d="m6 13 8-6M6 7l4 2v6M14 5v6" stroke="#6a6aa8" strokeWidth="2" />
    </>
  ),
  block: (
    <>
      <path d="m0 7 8-6 9 2 3 4v7l-9 6-6-2z" fill="#6a6ab2" />
      <path d="m0 7 8-6 9 2-7 6z" fill="#a5a5e0" />
      <path d="m10 9 7-5 3 3-8 6z" fill="#8787cc" />
      <path d="M10 9v5l-4 5" stroke="#4a4a90" />
    </>
  ),
  surfParallel: (
    <>
      <path d="m3 8 9 11M6 6l9 11M9 3l9 11M6 10l5 6M12 4l7 9" stroke="#1a4fae" strokeWidth="1.600" />
      <path d="m0 8 8-8M12 20l8-8" stroke="#19951f" strokeWidth="1.800" />
    </>
  ),
  surfRadial: (
    <>
      <path d="M1 12C2 6 7 1 17 3c2 3-1 11-9 14-4 1-6-2-7-5z" fill="none" stroke="#19951f" strokeWidth="2.200" />
      <path d="M4 14c2-6 5-5 6-12M8 17c2-6 5-5 6-13M12 16c1-5 4-5 5-10M4 9l9 6M7 5l10 5" fill="none" stroke="#1a3fae" strokeWidth="1.800" />
    </>
  ),
  surfProject: (
    <>
      <path d="M1 8c3-8 10-8 14-3l4 7c-3 7-7 9-10 4l-1-6z" fill="none" stroke="#19951f" strokeWidth="1.400" />
      <path d="m5 6 5 7M8 4l5 8M11 5l3 5M4 9l4-5" fill="none" stroke="#1a3fae" strokeWidth="1.300" />
    </>
  ),
  surfFlow: (
    <>
      <path d="m3 5 6 8M6 3l7 9M9 1l7 9M12 1l6 8" stroke="#1a4fae" strokeWidth="1.700" />
      <path d="M0 9c5 1 8 5 10 10 3-5 6-7 10-8" fill="none" stroke="#19951f" strokeWidth="2" />
    </>
  ),
  surfContour: (
    <>
      <path d="M5 5c3-5 4-4 6-3M8 8c3-6 4-4 6-3M11 10c2-5 4-4 6-3" stroke="#1a4fae" strokeWidth="1.600" fill="none" />
      <path d="M0 8c5 1 8 4 11 10 1-5 4-8 9-8" fill="none" stroke="#19951f" strokeWidth="2" />
    </>
  ),
  surfRest: (
    <>
      <path d="m6 2 13 13M6 6l4-4M9 9l4-4M12 12l4-4M15 15l4-4" stroke="#1a4a8e" strokeWidth="2.200" />
      <path d="M1 4c0 6 3 5 6 7 3 3 3 9 9 7" fill="none" stroke="#19951f" strokeWidth="1.800" />
    </>
  ),
};

function Icon({ name }: { name: string }) {
  return (
    <svg viewBox="0 0 20 20" fill="none" aria-hidden="true" className="size-5 shrink-0">
      {icons[name]}
    </svg>
  );
}

/* Entries of a toolbar: an icon name, "|" for a separator, "v" for a drop-down arrow. */
const topRow: string[][] = [
  ["new", "open", "save", "print", "preview", "funnel"],
  ["undo", "redo"],
  ["fit", "repaint", "|", "zoomWindow", "zoomTarget", "zoomEqual", "|", "unzoomWindow", "unzoom", "|", "viewNext", "viewPrev", "viewSave"],
  ["cubeTop", "cubeFront", "cubeRight", "cubeIso"],
  ["cubePlane", "v"],
  ["wireSphere", "v", "sphere", "v", "solidRed", "wireRed"],
  ["eraser", "eraserMany", "v", "|", "eraserUndo", "v"],
  ["helpEntity", "film", "|", "compare", "brush", "sigma", "stitch", "v"],
];

const sketchRow: string[][] = [
  ["plus", "v", "line", "v", "circle", "v", "rect", "v", "fillet", "v", "spline", "v", "cylinder", "v"],
  ["trim", "breakLine", "v"],
  ["xformDynamic", "xformTranslate", "xformRotate", "xformMirror", "xformScale", "xformMove", "xformOffset", "|", "offset", "v", "array", "stretch", "v"],
  ["bulb", "v", "dimension"],
  ["machineSim", "machineRun", "robot", "partOrb"],
];

function ToolbarGroup({ items }: { items: string[] }) {
  return (
    <div className="flex border-l border-[#a0a0a0] pb-[3px] pr-1 pt-[3px]">
      <div className="relative flex items-center bg-[#f0f0f0] pl-3">
        <span className="absolute bottom-0 left-0 h-[7px] w-[13px] bg-white" />
        <span className="absolute right-0 top-0 h-[3px] w-[15px] bg-white" />
        {items.map((item, i) => {
          if (item === "|") return <span key={i} className="mx-1 h-[22px] w-0.5 bg-[#a0a0a0]" />;
          if (item === "v") {
            return (
              <button key={i} aria-label={`${items[i - 1]} options`} className="flex h-7 w-[19px] items-center justify-center">
                <span className="border-x-[5px] border-t-[5px] border-x-transparent border-t-[#222]" />
              </button>
            );
          }
          return (
            <button key={i} aria-label={item} className="flex h-7 w-[29px] items-center justify-center">
              <Icon name={item} />
            </button>
          );
        })}
      </div>
    </div>
  );
}

function Chevron({ className }: { className: string }) {
  return (
    <svg viewBox="0 0 12 12" fill="none" stroke="currentColor" strokeWidth="1.500" aria-hidden="true" className={className}>
      <path d="m1 3.500 5 5 5-5" />
    </svg>
  );
}

function CoordField({ axis, value }: { axis: string; value: string }) {
  return (
    <div className="flex items-center gap-1.5">
      <button aria-label={`${axis} lock`} className="h-7 w-[27px] border border-[#b8b8b8] bg-[#ccc] text-[16px] leading-6 text-[#333] underline">
        {axis}
      </button>
      <div className="flex h-[26px] w-[90px] items-center border border-[#ccc] bg-white">
        <input
          aria-label={axis}
          defaultValue={value}
          className="h-5 w-[66px] bg-[#f4f4f4] pl-[3px] font-['Roboto_Condensed','Liberation_Sans',sans-serif] text-[16px] text-[#111] outline-none"
        />
        <Chevron className="ml-1.5 size-3 text-[#c0c0c0]" />
      </div>
    </div>
  );
}

function BarButton({ name, active = false }: { name: string; active?: boolean }) {
  return (
    <button
      aria-label={name}
      className={`flex size-7 items-center justify-center border ${
        active ? "border-[#b4b4b4] bg-[#dcdcdc]" : "border-[#f4f4f4] border-b-[#c4c4c4] border-r-[#c4c4c4] bg-[#f0f0f0]"
      }`}
    >
      <svg viewBox="0 0 20 20" fill="none" aria-hidden="true" className="size-6 shrink-0">
        {icons[name]}
      </svg>
    </button>
  );
}

function CoordBar() {
  return (
    <div className="flex h-[39px] w-[1279px] shrink-0 items-center border-r border-t border-[#a8a8a8] bg-[#ffffcc]">
      <div className="flex w-[560px] items-center gap-4 pl-[5px]">
        <CoordField axis="X" value="-30.77807" />
        <CoordField axis="Y" value="46.74501" />
        <CoordField axis="Z" value="0.0" />
        <div className="-ml-2 flex items-center gap-0.5">
          <BarButton name="fast" />
          <BarButton name="exclaim" />
          <BarButton name="face" />
          <button aria-label="face options" className="mr-0.5 flex h-7 w-4 items-center justify-center border border-[#ccc] bg-[#f0f0f0]">
            <span className="border-x-[4px] border-t-[4px] border-x-transparent border-t-[#999]" />
          </button>
          <BarButton name="question" active />
        </div>
      </div>
      <div className="flex flex-1 items-center self-stretch border-l-2 border-[#b4b4b4]">
        <span className="ml-[5px] h-7 w-1 border-r border-[#a8a8a8]" />
        <button className="ml-[7px] h-7 w-[58px] border-2 border-[#b4b4b4] bg-[#e1e1e1] text-[15px] leading-5">전체...</button>
        <button className="ml-[11px] h-7 w-[58px] border-2 border-[#b4b4b4] bg-[#e1e1e1] text-[15px] leading-5">단일...</button>
        <div className="ml-2.5">
          <BarButton name="arrowPick" active />
        </div>
        <div className="relative ml-2">
          <select aria-label="Selection mode" className="h-[27px] w-[90px] appearance-none border-2 border-[#b4b4b4] bg-[#e1e1e1] pl-1 text-[16px] leading-5">
            <option>In</option>
          </select>
          <Chevron className="pointer-events-none absolute right-1.5 top-2 size-3 text-[#555]" />
        </div>
        <button aria-label="window" className="ml-[11px] flex h-7 w-[46px] items-center justify-between bg-[#f0f0f0] px-1">
          <Icon name="dotted" />
          <span className="border-x-[4px] border-t-[4px] border-x-transparent border-t-black" />
        </button>
        <div className="ml-[3px] flex gap-[3px]">
          <BarButton name="cursorOff" />
          <BarButton name="hexCheck" />
        </div>
        <div className="ml-2 flex gap-0.5">
          <BarButton name="hex" />
          <BarButton name="hex" />
          <BarButton name="hex" />
        </div>
        <div className="ml-[9px] flex gap-[3px]">
          <BarButton name="cubeHalf" />
          <BarButton name="arcBack" active />
        </div>
        <div className="ml-[9px]">
          <BarButton name="cursorCheck" active />
        </div>
        <div className="ml-[9px] flex gap-0.5">
          <BarButton name="forbid" />
          <BarButton name="disc" />
        </div>
        <div className="ml-2.5">
          <BarButton name="question" active />
        </div>
      </div>
    </div>
  );
}

const millTools: string[][] = [
  ["boxHole", "boxPocket"],
  ["contour", "drillPath", "pocket", "facing", "drill", "surface"],
  ["circleMill", "thread", "slot", "helix"],
  ["contourCheck", "pocketPoint"],
  ["point", "pocketCorner", "expand", "block"],
];

const surfaceTools = ["surfParallel", "surfRadial", "surfProject", "surfFlow", "surfContour", "surfRest"];

function Grip() {
  return <span className="mx-1.5 mt-0.5 block h-[3px] border-t-2 border-dotted border-[#bbb]" />;
}

function SideTools() {
  return (
    <aside className="w-[37px] shrink-0 border-r border-[#d4d4d4] bg-white">
      <div className="h-[552px] border-b border-[#a0a0a0]">
        <div className="mr-1 h-[548px] bg-[#f0f0f0] pt-px">
          <Grip />
          <div className="pt-[7px]">
            {millTools.map((group, i) => (
              <div key={i}>
                {i > 0 && <span className="mx-1.5 my-[3px] block h-0.5 bg-[#a8a8a8]" />}
                {group.map((name) => (
                  <button key={name} aria-label={name} className="flex h-7 w-[34px] items-center justify-center">
                    <Icon name={name} />
                  </button>
                ))}
              </div>
            ))}
          </div>
        </div>
      </div>
      <div className="h-[184px] border-b border-[#a0a0a0]">
        <div className="mr-1 h-[179px] bg-[#f0f0f0] pt-px">
          <Grip />
          <div className="pt-[7px]">
            {surfaceTools.map((name) => (
              <button key={name} aria-label={name} className="flex h-[27px] w-[34px] items-center justify-center">
                <Icon name={name} />
              </button>
            ))}
          </div>
        </div>
      </div>
    </aside>
  );
}

type TreeNode = { level: number; icon: string; label: string; box?: "+" | "-"; selected?: boolean; last?: boolean };

const tree: TreeNode[] = [
  { level: 0, icon: "machineGroup", label: "머신 그룹-1", box: "-" },
  { level: 1, icon: "properties", label: "속성 - Mill Default MM", box: "+" },
  { level: 1, icon: "pathGroup", label: "가공경로 그룹-1", box: "-", last: true },
  { level: 2, icon: "folder", label: "1 - Drill/Counterbore - [WCS: 평면] -", box: "+" },
  { level: 2, icon: "folder", label: "2 - 펙드릴 - [WCS: 평면] - [공구평면", box: "+" },
  { level: 2, icon: "folder", label: "3 - 윤곽 (2D) - [WCS: 평면] - [공구평", box: "+" },
  { level: 2, icon: "folder", label: "4 - 윤곽 (2D) - [WCS: 평면] - [공구평", box: "+" },
  { level: 2, icon: "folder", label: "5 - 포켓 (기본형) - [WCS: 평면] - [공", box: "+" },
  { level: 2, icon: "folder", label: "6 - 윤곽 (2D) - [WCS: 평면] - [공구평", box: "+" },
  { level: 2, icon: "folder", label: "7 - 페이싱 - [WCS: 평면] - [공구평면", box: "+" },
  { level: 2, icon: "folder", label: "8 - 윤곽 (2D) - [WCS: 평면] - [공구평", box: "+" },
  { level: 2, icon: "folder", label: "9 - 윤곽 (2D) - [WCS: 평면] - [공구평", box: "+" },
  { level: 2, icon: "folder", label: "10 - Bore #1 (feed-out) - [WCS: 평면", box: "+" },
  { level: 2, icon: "folderOpen", label: "11 - 윤곽 (2D) - [WCS: 평면] - [공구", box: "-", selected: true },
  { level: 3, icon: "folderGray", label: "조건" },
  { level: 3, icon: "endmill", label: "#5 - M12.00 평엔드밀 -" },
  { level: 3, icon: "geometry", label: "도형 - (2) 체인" },
  { level: 3, icon: "nci", label: "가공경로 - 9.7K - O20210305_01", last: true },
  { level: 2, icon: "insert", label: "", last: true },
];

function TreeRow({ node }: { node: TreeNode }) {
  return (
    <li className="flex flex-1 items-center whitespace-nowrap">
      {Array.from({ length: node.level }, (_, i) => (
        <span key={i} className="w-6 shrink-0 self-stretch pl-3">
          {i === 2 && <span className="block h-full border-l border-dotted border-[#444]" />}
        </span>
      ))}
      <span className="relative flex w-6 shrink-0 items-center self-stretch">
        {node.level > 0 && <span className={`absolute left-3 top-0 border-l border-dotted border-[#444] ${node.last ? "h-1/2" : "h-full"}`} />}
        <span className="ml-3 flex-1 border-t border-dotted border-[#444]" />
        {node.box && (
          <span className="absolute left-[7px] flex size-[11px] items-center justify-center rounded-[1px] border border-[#8f8f8f] bg-[#f6f6f6]">
            <span className="absolute h-px w-[7px] bg-[#2c4a9a]" />
            {node.box === "+" && <span className="absolute h-[7px] w-px bg-[#2c4a9a]" />}
          </span>
        )}
      </span>
      <Icon name={node.icon} />
      <span className={node.selected ? "ml-1 flex-1 self-stretch bg-[#0078d7] pl-[3px] text-white" : "ml-[7px]"}>{node.label}</span>
    </li>
  );
}

function PanelTools({ items }: { items: string[] }) {
  return (
    <div className="flex h-[37px] items-center pl-1.5">
      {items.map((item, i) =>
        item === "|" ? (
          <span key={i} className="mx-[3px] h-6 w-px bg-[#909090]" />
        ) : (
          <button key={i} aria-label={item} className="flex h-7 w-[29px] items-center justify-center">
            {item === "G1" ? <span className="font-['Liberation_Serif',serif] text-[18px] font-bold text-[#9b9b9b]">G1</span> : <Icon name={item} />}
          </button>
        ),
      )}
    </div>
  );
}

function OperationsManager() {
  return (
    <section className="flex w-[368px] shrink-0 flex-col border-r-2 border-[#a0a0a0] bg-[#f0f0f0]">
      <header className="flex h-[22px] shrink-0 items-start bg-[#b4b4b4] pl-1.5">
        <h2 className="flex-1 text-[15px] leading-4">작업 관리자</h2>
        <button aria-label="Panel menu" className="mt-px flex h-[22px] w-[26px] items-center justify-center border border-[#ddd] bg-[#f0f0f0]">
          <span className="mt-1.5 border-x-[5px] border-t-[5px] border-x-transparent border-t-black" />
        </button>
        <button aria-label="Close panel" className="relative ml-[6px] mr-[7px] mt-px flex h-6 w-[26px] items-center justify-center border border-[#a8a8a8] bg-[#f0f0f0]">
          <svg viewBox="0 0 12 12" className="size-3" stroke="#333" aria-hidden="true">
            <path d="m1 1 10 10M11 1 1 11" />
          </svg>
        </button>
      </header>
      <div role="tablist" className="flex h-[29px] items-start text-[15px] text-[#222]">
        <button role="tab" aria-selected="true" className="h-[26px] w-[73px] bg-white leading-5">
          <span className="block h-6">가공경로</span>
        </button>
        <button role="tab" aria-selected="false" className="mt-0.5 h-6 w-[53px] border border-[#d9d9d9] leading-5">
          솔리드
        </button>
      </div>
      <div className="mx-[3px] border-y border-[#a0a0a0]">
        <PanelTools items={["checkPlay", "checkX", "|", "toolPlay", "toolX", "|", "square", "octagon", "G1", "toolNext", "|", "wand", "|", "questionOff"]} />
      </div>
      <div className="mx-[3px] pb-2 pt-px">
        <PanelTools items={["lock", "waves", "lockFill", "|", "down", "up", "loop", "split", "|", "wavesOff", "shapes"]} />
      </div>
      <div className="mb-1.5 ml-[5px] mr-[7px] flex flex-1 flex-col justify-between border border-[#828790] bg-white pb-0.5 pr-px">
        <ul className="flex h-[428px] flex-col overflow-hidden pl-1 text-[16px] leading-[22px] text-[#1e1e1e]">
          {tree.map((node, i) => (
            <TreeRow key={i} node={node} />
          ))}
        </ul>
        <div className="ml-px flex h-5 bg-[#f0f0f0] text-[#505050]">
          <button aria-label="Scroll left" className="flex w-[22px] items-center justify-center">
            <Chevron className="size-3 rotate-90" />
          </button>
          <span className="w-[133px] bg-[#cdcdcd]" />
          <button aria-label="Scroll right" className="ml-auto flex w-[22px] items-center justify-center">
            <Chevron className="size-3 -rotate-90" />
          </button>
        </div>
      </div>
    </section>
  );
}

const dashes = "10 10 10 10 10 30";

const points = [
  [770, 432], [733, 484], [911, 477], [1134, 398], [1097, 494], [1089, 654], [1015, 736], [993, 833], [1038, 833],
];

function AxisMarker({ x, y }: { x: number; y: number }) {
  return (
    <g>
      <path d={`M${x} ${y}v-25`} stroke="#00ee00" />
      <path d={`M${x} ${y}h25`} stroke="#ee0000" />
      <text x={x - 5} y={y - 33} fill="#00ee00" className="text-[14px] font-bold">Y</text>
      <text x={x + 33} y={y + 5} fill="#ff0000" className="text-[14px] font-bold">X</text>
    </g>
  );
}

function Viewport() {
  return (
    <main className="min-w-0 flex-1 overflow-hidden bg-black">
      <svg role="img" aria-label="Part geometry" className="h-full w-full font-['Liberation_Sans','Noto_Sans_CJK_KR',sans-serif]">
        {/* geometry is kept in window coordinates */}
        <g transform="translate(-405 -209)">
          <g fill="none" shapeRendering="crispEdges">
            <path d="M405 899.500h1049M651.500 209v691M652.500 899v97M652 900.500h802" stroke="#7a3c00" />
            <path d="M652.500 209v88M1245.500 209v88" stroke="#00d8d8" />
            <path d="M652 306.500h594M652.500 306v593M652 899.500h594M1245.500 306v593" stroke="#e00000" />
            <path d="M652 306.500h594M652 899.500h594" stroke="#00d8d8" strokeDasharray={dashes} strokeDashoffset="51" />
            <path d="M652.500 306v593M1245.500 306v593" stroke="#00d8d8" strokeDasharray={dashes} strokeDashoffset="46" />
            <path d="M652.500 875v25.500h24" stroke="#00ffff" />

            <g stroke="#00e4e4">
              <path d="M770 358.500H1163.500L1200.500 395V736A185 185 0 0 1 1164 848.500H1097V833A59.500 59.500 0 0 0 1037.500 773H992.500A59.500 59.500 0 0 0 933.500 833V848.500H883L695.500 780V432A74 74 0 0 1 770 358.500" />
              <path d="M696 484A37 37 0 0 0 733 520.500H748A59 59 0 0 1 748.500 639.500V799" />
              <circle cx="748.500" cy="580.500" r="29.500" />
              <circle cx="911.500" cy="654.500" r="92.500" />
              <path d="M852.500 584V477A59 59 0 0 1 970.500 477V584" />
              <path d="M897.500 636V476A14 14 0 0 1 925.500 476V636" />
              <path d="M982 595.500H1089A59 59 0 0 1 1089 714.500H982" />
              <path d="M930 639.500H1089A15 15 0 0 1 1089 669.500H929" />
              <path d="M1163.500 358V399A29.500 29.500 0 0 1 1134 428.500H1097A66 66 0 0 0 1097 561.500H1149.500L1200.500 613" />
              <circle cx="1097.500" cy="494.500" r="29.500" />
              <path d="M911.500 644v21M901 654.500h21" />
              <path d="M500 460.500 842 625.500M692 547 721 567 687 557M811 603 775 593.500 805 614" />
              <path d="M499 828.500 997 619M858 671 826 690.500 862 682M960 627 997 619 965 638.500" />
              <path d="M1253 306.500h161M1253 899.500h161M1394.500 306v593" />
              <path d="M1389 342 1395 306 1401 342M1389 863 1395 899 1400 863" />
            </g>
            <path d="m897 636 32 33" stroke="#cccc00" />
            {points.map(([x, y]) => (
              <rect key={`${x}-${y}`} x={x} y={y} width="1" height="1" fill="#00c0c0" />
            ))}
          </g>

          <g fill="#00e4e4" stroke="#00e4e4" strokeWidth=".3" className="font-['Roboto_Condensed','Roboto',sans-serif] text-[45px] font-thin">
            <text transform="translate(511 453) rotate(25.800)">Ø 8.00</text>
            <text transform="translate(498 813) rotate(-22.800)">Ø 25.00</text>
            <text transform="translate(1383 475) rotate(-90)">80.00</text>
          </g>

          <g shapeRendering="crispEdges">
            <AxisMarker x={455.5} y={284.5} />
            <AxisMarker x={455.5} y={946.5} />
          </g>
          <g fill="#00ffff" className="text-[14px] font-bold">
            <text x="647" y="868">Y</text>
            <text x="685" y="906">X</text>
          </g>
          <g fill="#c8c8c8" className="text-[16px] font-medium">
            <text x="453" y="297">작</text>
            <text x="414" y="981">그래픽뷰:평면</text>
            <text x="522" y="981">WCS:평면</text>
            <text x="605" y="981">공구/작업평면:평면</text>
          </g>
        </g>
      </svg>
    </main>
  );
}

function StatusBar() {
  return (
    <footer className="flex h-[19px] shrink-0 items-start justify-end overflow-hidden border-t-2 border-white bg-[#f0f0f0] pt-[5px] text-[15px] leading-6 shadow-[inset_0_2px_0_#d8d8d8]">
      <button className="h-6 w-[33px] bg-[#c8c8c8] leading-5">3D</button>
      <button className="ml-2 h-6 w-[82px] bg-[#c8c8c8] leading-5">그래픽뷰</button>
      <button className="ml-2 h-6 w-8 bg-[#c8c8c8] leading-5">평면</button>
      <label htmlFor="depth" className="ml-2 h-6 w-[18px] border border-[#ccc] leading-5">Z</label>
      <div className="flex h-6 w-[123px] border-2 border-[#888] bg-white px-0.5">
        <input id="depth" defaultValue="0.0" className="h-5 w-[94px] bg-[linear-gradient(90deg,#0078d7_23px,#ffff80_23px)] text-[15px] leading-5 text-white outline-none" />
        <Chevron className="ml-2 mt-1.5 size-3 text-[#999]" />
      </div>
      <button className="ml-[7px] h-6 w-[50px] bg-[#00ffff] leading-5">11</button>
      <button aria-label="Colour list" className="flex h-6 w-[18px] justify-center bg-[#c0c0c0] pt-2">
        <span className="h-0 border-x-[6px] border-t-[6px] border-x-transparent border-t-black" />
      </button>
      <label htmlFor="layer" className="ml-2 h-6 w-10 border border-[#ccc] leading-5">레벨</label>
      <input id="layer" defaultValue="1" className="h-6 w-[130px] border-2 border-[#888] bg-white pl-1 text-[15px] leading-5 outline-none" />
    </footer>
  );
}

const menus = ["F:파일", "E:수정", "V:뷰", "A:측정", "C:그리기", "S:솔리드", "X:이동", "M:머신 형태", "T:가공경로", "R:화면", "I:설정", "H:도움말"];

export default function App() {
  return (
    <div className="flex h-screen flex-col overflow-hidden bg-white font-['Noto_Sans_CJK_KR',sans-serif] text-black">
      <div className="flex h-7 shrink-0 items-center gap-1.5 pl-0.5">
        <Icon name="logo" />
        <h1 className="whitespace-pre text-[16px] leading-5">{"Mastercam 밀링 X5  C:₩USERS₩TOYSK₩DESKTOP₩O20210305_01 MACAM MCT 2D (단차 탭드릴 리머 가공 포함).MCX-5"}</h1>
      </div>
      <nav className="flex h-[26px] shrink-0 items-center gap-5 pl-2 text-[15px] leading-5 text-[#333]">
        {menus.map((menu) => (
          <button key={menu} className="whitespace-nowrap">{menu}</button>
        ))}
      </nav>

      <div className="h-0.5 shrink-0 bg-[#b8b8b8]" />
      <div className="flex h-9 w-[1349px] shrink-0 border-b border-r border-[#a0a0a0] pl-px">
        {topRow.map((items, i) => (
          <ToolbarGroup key={i} items={items} />
        ))}
      </div>
      <div className="flex h-[37px] w-[1030px] shrink-0 border-r border-[#a0a0a0] pl-px">
        {sketchRow.map((items, i) => (
          <ToolbarGroup key={i} items={items} />
        ))}
      </div>
      <CoordBar />
      <div className="flex h-[41px] shrink-0 items-center border-b-2 border-t border-b-[#888] border-t-[#a8a8a8] bg-[#f0f0f0] pb-0.5 pl-[234px] text-[15px] leading-5">
        리본 바
      </div>

      <div className="flex min-h-0 flex-1">
        <SideTools />
        <OperationsManager />
        <Viewport />
      </div>
      <StatusBar />
    </div>
  );
}
